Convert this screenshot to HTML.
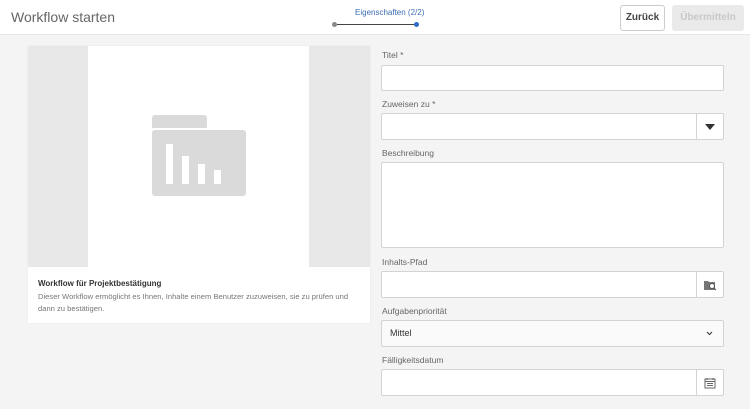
<html><head><style>
body{margin:0;width:750px;height:409px;background:#f4f4f4;font-family:"Liberation Sans",sans-serif;position:relative;overflow:hidden}
.a{position:absolute}
.hdr{left:0;top:0;width:750px;height:34px;background:#fff;border-bottom:1px solid #e6e6e6}
.lbl{font-size:8.5px;color:#666;left:382px}
.inp{left:381px;width:341px;background:#fff;border:1px solid #d3d3d3;border-radius:2px}
.btnr{right:0;top:0;bottom:0;width:26px;border-left:1px solid #d3d3d3;display:flex;align-items:center;justify-content:center}
</style></head><body>
<div class="a hdr"></div>
<div class="a" style="left:11px;top:9px;font-size:14px;color:#666">Workflow starten</div>
<div class="a" style="left:355px;top:8px;font-size:8px;color:#3d6fb5">Eigenschaften (2/2)</div>
<div class="a" style="left:332px;top:22px;width:5px;height:5px;border-radius:50%;background:#888"></div>
<div class="a" style="left:337px;top:24px;width:77px;height:1px;background:#444"></div>
<div class="a" style="left:414px;top:22px;width:5px;height:5px;border-radius:50%;background:#2d6bc4"></div>
<div class="a" style="left:620px;top:5px;width:43px;height:24px;border:1px solid #ccc;border-radius:3px;background:#fff;font-size:10px;font-weight:bold;color:#444;text-align:center;line-height:24px;box-sizing:content-box">Zurück</div>
<div class="a" style="left:672px;top:5px;width:72px;height:26px;border-radius:3px;background:#eaeaea;font-size:10px;font-weight:bold;color:#c8c8c8;text-align:center;line-height:26px">Übermitteln</div>

<div class="a" style="left:28px;top:46px;width:342px;height:277px;background:#fff;box-shadow:0 0 1px #ddd"></div>
<div class="a" style="left:28px;top:46px;width:342px;height:221px;background:#e8e8e8"></div>
<div class="a" style="left:88px;top:46px;width:221px;height:221px;background:#fff"></div>
<svg class="a" style="left:150px;top:114px" width="98" height="84"><path d="M2 4a3 3 0 0 1 3-3h49a3 3 0 0 1 3 3v10H2z" fill="#dadada"/><rect x="2" y="16" width="94" height="66" rx="3" fill="#dadada"/><rect x="16" y="30" width="7" height="40" fill="#fff"/><rect x="32" y="42" width="7" height="28" fill="#fff"/><rect x="48" y="50" width="7" height="20" fill="#fff"/><rect x="64" y="56" width="7" height="14" fill="#fff"/></svg>
<div class="a" style="left:38px;top:279px;font-size:8px;font-weight:bold;color:#333">Workflow für Projektbestätigung</div>
<div class="a" style="left:38px;top:291px;width:325px;font-size:7.6px;line-height:11.5px;color:#777">Dieser Workflow ermöglicht es Ihnen, Inhalte einem Benutzer zuzuweisen, sie zu prüfen und dann zu bestätigen.</div>

<div class="a lbl" style="top:50px">Titel *</div>
<div class="a inp" style="top:65px;height:24px"></div>
<div class="a lbl" style="top:99px">Zuweisen zu *</div>
<div class="a inp" style="top:113px;height:25px"><div class="a btnr"><svg width="10" height="6"><path d="M0 0h10L5 6z" fill="#333"/></svg></div></div>
<div class="a lbl" style="top:148px">Beschreibung</div>
<div class="a inp" style="top:162px;height:84px"></div>
<div class="a lbl" style="top:257px">Inhalts-Pfad</div>
<div class="a inp" style="top:271px;height:25px"><div class="a btnr"><svg width="14" height="12"><path d="M1 2h4l1 1h6v8H1z" fill="#777"/><circle cx="9" cy="7" r="2.5" fill="#fff" stroke="#555"/><path d="M11 9l2 2" stroke="#555"/></svg></div></div>
<div class="a lbl" style="top:306px">Aufgabenpriorität</div>
<div class="a inp" style="top:320px;height:25px;background:#fafafa"><div class="a" style="left:8px;top:7px;font-size:9px;color:#333">Mittel</div><svg class="a" style="right:10px;top:10px" width="7" height="5"><path d="M1 1l2.5 2.5L6 1" stroke="#444" fill="none" stroke-width="1.2"/></svg></div>
<div class="a lbl" style="top:355px">Fälligkeitsdatum</div>
<div class="a inp" style="top:369px;height:25px"><div class="a btnr"><svg width="12" height="12"><rect x="1" y="2" width="10" height="9" fill="none" stroke="#666"/><path d="M1 4.5h10M3 6.5h6M3 8.5h6M3 1v2M9 1v2" stroke="#666"/></svg></div></div>
</body></html>
